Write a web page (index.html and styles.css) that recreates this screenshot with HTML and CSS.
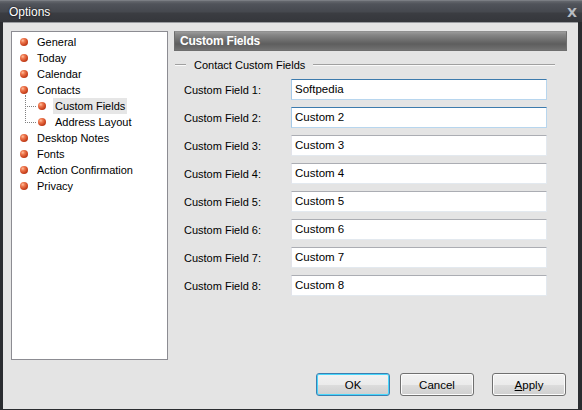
FILE: index.html
```html
<!DOCTYPE html>
<html>
<head>
<meta charset="utf-8">
<link rel="stylesheet" href="styles.css">
</head>
<body>
<div class="window">
  <div class="titlebar">
    <span class="title">Options</span>
    <span class="close">X</span>
  </div>
  <div class="frame">
    <div class="content">
      <div class="top">
        <ul class="tree">
          <li class="item"><span class="bullet"></span><span class="label">General</span></li>
          <li class="item"><span class="bullet"></span><span class="label">Today</span></li>
          <li class="item"><span class="bullet"></span><span class="label">Calendar</span></li>
          <li class="item"><span class="bullet"></span><span class="label">Contacts</span></li>
          <li class="item child first"><span class="connector"></span><span class="bullet"></span><span class="label selected">Custom Fields</span></li>
          <li class="item child last"><span class="connector"></span><span class="bullet"></span><span class="label">Address Layout</span></li>
          <li class="item"><span class="bullet"></span><span class="label">Desktop Notes</span></li>
          <li class="item"><span class="bullet"></span><span class="label">Fonts</span></li>
          <li class="item"><span class="bullet"></span><span class="label">Action Confirmation</span></li>
          <li class="item"><span class="bullet"></span><span class="label">Privacy</span></li>
        </ul>
        <div class="panel">
          <div class="header">Custom Fields</div>
          <div class="group">
            <span class="line short"></span>
            <span class="legend">Contact Custom Fields</span>
            <span class="line long"></span>
          </div>
          <div class="rows">
            <div class="row"><span class="flabel">Custom Field 1:</span><span class="input active">Softpedia</span></div>
            <div class="row"><span class="flabel">Custom Field 2:</span><span class="input active">Custom 2</span></div>
            <div class="row"><span class="flabel">Custom Field 3:</span><span class="input">Custom 3</span></div>
            <div class="row"><span class="flabel">Custom Field 4:</span><span class="input">Custom 4</span></div>
            <div class="row"><span class="flabel">Custom Field 5:</span><span class="input">Custom 5</span></div>
            <div class="row"><span class="flabel">Custom Field 6:</span><span class="input">Custom 6</span></div>
            <div class="row"><span class="flabel">Custom Field 7:</span><span class="input">Custom 7</span></div>
            <div class="row"><span class="flabel">Custom Field 8:</span><span class="input">Custom 8</span></div>
          </div>
        </div>
      </div>
      <div class="buttons">
        <button class="btn default">OK</button>
        <button class="btn">Cancel</button>
        <button class="btn apply"><u>A</u>pply</button>
      </div>
    </div>
  </div>
</div>
</body>
</html>
```
FILE: styles.css
```css
html, body {
  margin: 0;
  padding: 0;
}
body {
  width: 582px;
  height: 410px;
  background: #2e3034;
  font-family: "Liberation Sans", Arial, sans-serif;
  font-size: 11px;
  color: #000;
  overflow: hidden;
}
.window {
  width: 582px;
  height: 410px;
  display: flex;
  flex-direction: column;
}
.titlebar {
  height: 22px;
  flex: none;
  display: flex;
  align-items: center;
  justify-content: space-between;
  background: linear-gradient(#65686e 0px, #50535a 3px, #45484e 11px, #3b3d42 12px, #34363b 22px);
  border-top: 1px solid #7a7d83;
  box-sizing: border-box;
  padding: 0 5px 0 9px;
}
.title {
  color: #fff;
  font-family: "Liberation Sans", sans-serif;
  font-size: 12px;
  text-shadow: 0 0 2px #000;
  padding-top: 1px;
}
.close {
  color: #b8bcc2;
  font-family: "DejaVu Sans", sans-serif;
  font-weight: bold;
  font-size: 13px;
  padding-top: 2px;
}
.frame {
  flex: 1;
  padding: 0 4px 3px 3px;
  display: flex;
  background: #2a2c30;
}
.content {
  flex: 1;
  background: #e4e4e4;
  border-top: 1px solid #9a9ca0;
  padding: 8px 11px 13px 8px;
  display: flex;
  flex-direction: column;
}
.top {
  display: flex;
  height: 329px;
}
.tree {
  list-style: none;
  margin: 0;
  padding: 2px 0 0 0;
  width: 157px;
  box-sizing: border-box;
  background: #fff;
  border: 1px solid #8c8c92;
  flex: none;
}
.item {
  height: 16px;
  display: flex;
  align-items: center;
  position: relative;
  padding-left: 8px;
}
.bullet {
  width: 8px;
  height: 8px;
  border-radius: 50%;
  background: radial-gradient(circle at 35% 32%, #ffc0a0 0, #ef7a50 25%, #c8401c 65%, #8a2a10 100%);
  flex: none;
}
.label {
  padding: 1px 2px;
  height: 14px;
  line-height: 14px;
  margin-left: 7px;
}
.selected {
  background: #e6e6e6;
}
.child {
  padding-left: 26px;
}
.connector {
  position: absolute;
  left: 13px;
  top: -3px;
  width: 10px;
  height: 11px;
  border-left: 1px dotted #808080;
  border-bottom: 1px dotted #808080;
}
.child.last .connector {
  top: -8px;
  height: 16px;
}
.panel {
  flex: 1;
  margin-left: 6px;
  display: flex;
  flex-direction: column;
}
.header {
  height: 20px;
  box-sizing: border-box;
  border: 1px solid #6e6e6e;
  border-top-color: #909090;
  background: linear-gradient(#9a9a9a 0, #858585 3px, #6a6a6a 9px, #5e5e5e 12px, #6e6e6e 17px, #808080 20px);
  color: #fff;
  font-weight: bold;
  font-size: 12px;
  line-height: 18px;
  padding-left: 5px;
  letter-spacing: -0.2px;
}
.group {
  display: flex;
  align-items: center;
  margin-top: 6px;
  height: 16px;
}
.line {
  height: 0;
  border-top: 1px solid #a0a0a0;
  border-bottom: 1px solid #fafafa;
}
.line.short {
  width: 11px;
  margin-left: 1px;
}
.legend {
  padding: 0 8px 0 8px;
}
.line.long {
  flex: 1;
  margin-right: 12px;
}
.rows {
  display: flex;
  flex-direction: column;
  gap: 7px;
  margin-top: 6px;
}
.row {
  display: flex;
  align-items: center;
  height: 21px;
  padding-left: 10px;
}
.flabel {
  width: 107px;
  flex: none;
}
.input {
  width: 256px;
  height: 21px;
  box-sizing: border-box;
  background: #fff;
  border: 1px solid #e3e9ef;
  border-top-color: #abadb3;
  border-left-color: #e2e3ea;
  padding-left: 3px;
  line-height: 19px;
  font-size: 11.5px;
}
.input.active {
  border-color: #b8d6ee;
  border-top-color: #3d7bad;
  border-left-color: #a4c9e8;
}
.buttons {
  display: flex;
  justify-content: flex-end;
  margin-top: 13px;
  padding-right: 1px;
}
.btn {
  width: 74px;
  height: 23px;
  font-family: "Liberation Sans", Arial, sans-serif;
  font-size: 11.5px;
  color: #000;
  border: 1px solid #707070;
  border-radius: 3px;
  background: linear-gradient(#f2f2f2 0, #ebebeb 50%, #dddddd 51%, #cfcfcf 100%);
  box-shadow: inset 0 0 0 1px #fcfcfc;
  padding: 0;
  margin-left: 10px;
}
.btn.default {
  border-color: #3c7fb1;
  box-shadow: inset 0 0 0 1px #48d6fb;
}
.btn.apply {
  margin-left: 18px;
}
```
